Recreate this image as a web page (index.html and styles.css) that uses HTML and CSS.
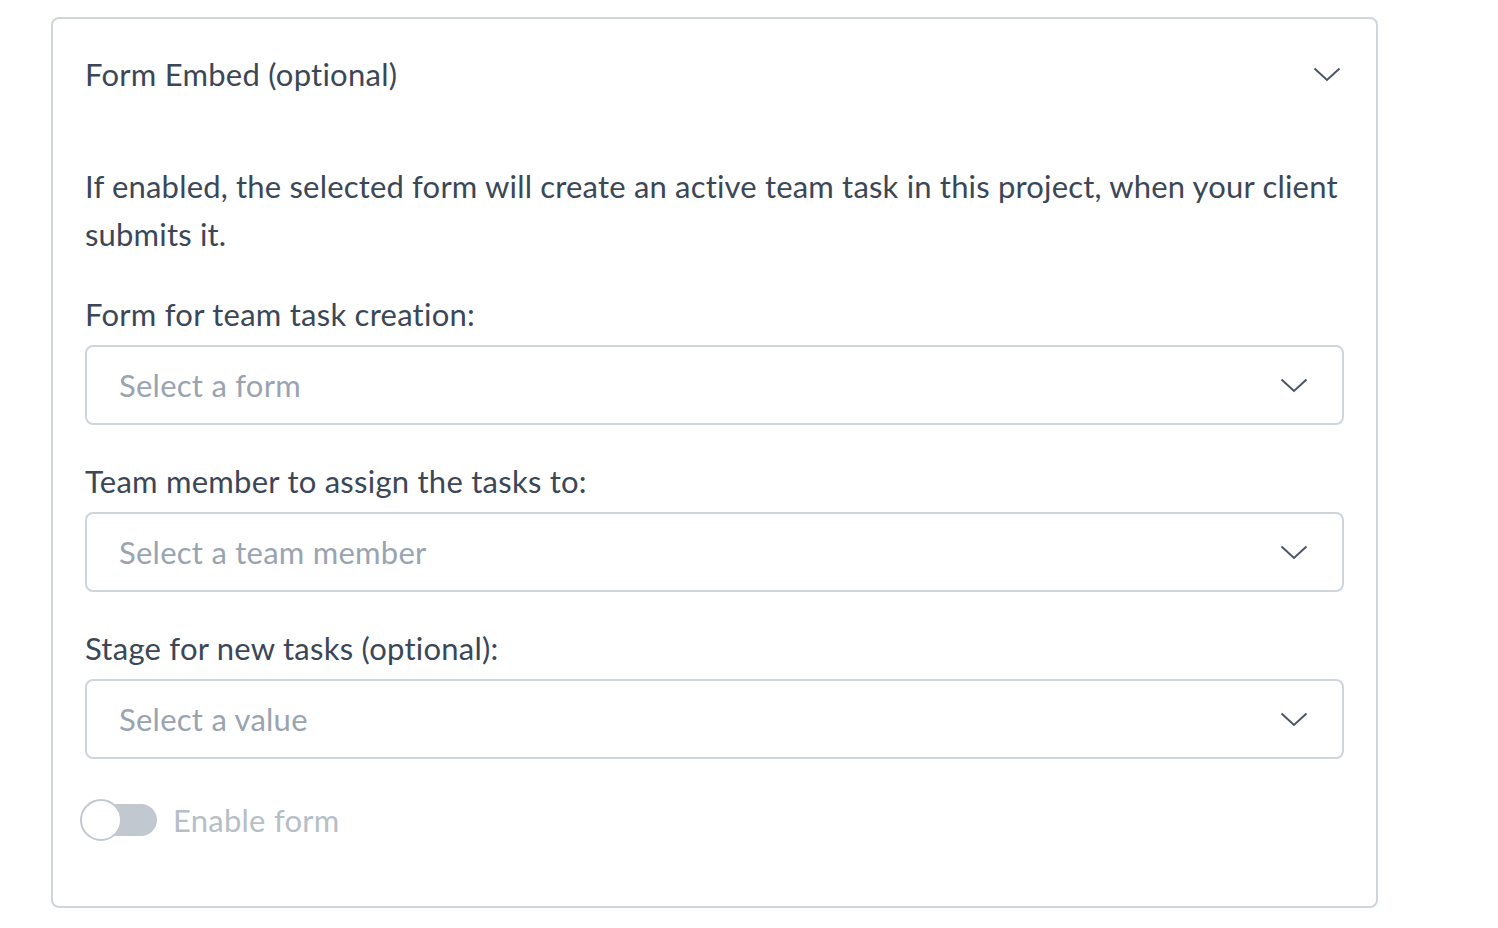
FILE: index.html
```html
<!DOCTYPE html>
<html lang="en">
<head>
<meta charset="utf-8">
<title>Form Embed</title>
<link rel="stylesheet" href="styles.css">
</head>
<body>
<section class="card">
  <header class="card-header">
    <h2 class="card-title">Form Embed (optional)</h2>
    <svg class="chevron" width="28" height="15" viewBox="0 0 28 15" aria-hidden="true"><polyline points="1.5,1.5 14,13 26.5,1.5" fill="none" stroke="#4a5565" stroke-width="2"/></svg>
  </header>
  <div class="card-body">
    <p class="intro">If enabled, the selected form will create an active team task in this project, when your client submits it.</p>
    <div class="field">
      <label class="field-label">Form for team task creation:</label>
      <div class="select">
        <span class="placeholder">Select a form</span>
        <svg class="chevron" width="28" height="15" viewBox="0 0 28 15" aria-hidden="true"><polyline points="1.5,1.5 14,13 26.5,1.5" fill="none" stroke="#4a5565" stroke-width="2"/></svg>
      </div>
    </div>
    <div class="field">
      <label class="field-label">Team member to assign the tasks to:</label>
      <div class="select">
        <span class="placeholder">Select a team member</span>
        <svg class="chevron" width="28" height="15" viewBox="0 0 28 15" aria-hidden="true"><polyline points="1.5,1.5 14,13 26.5,1.5" fill="none" stroke="#4a5565" stroke-width="2"/></svg>
      </div>
    </div>
    <div class="field">
      <label class="field-label">Stage for new tasks (optional):</label>
      <div class="select">
        <span class="placeholder">Select a value</span>
        <svg class="chevron" width="28" height="15" viewBox="0 0 28 15" aria-hidden="true"><polyline points="1.5,1.5 14,13 26.5,1.5" fill="none" stroke="#4a5565" stroke-width="2"/></svg>
      </div>
    </div>
    <div class="toggle-row">
      <span class="toggle"><span class="knob"></span></span>
      <span class="toggle-label">Enable form</span>
    </div>
  </div>
</section>
</body>
</html>
```

FILE: styles.css
```css
html, body {
  margin: 0;
  padding: 0;
  background: #ffffff;
}

body {
  font-family: Lato, "Open Sans", sans-serif;
  font-size: 31px;
  letter-spacing: 0.25px;
  color: #3b4757;
  padding: 17px 0 0 51px;
}

.card {
  box-sizing: border-box;
  width: 1327px;
  height: 891px;
  border: 2px solid #cfd5dd;
  border-radius: 8px;
  background: #ffffff;
}

.card-header {
  display: flex;
  align-items: center;
  justify-content: space-between;
  padding: 31px 35px 32px 32px;
  height: 48px;
}

.card-title {
  margin: 0;
  font-size: 31px;
  font-weight: 400;
  line-height: 48px;
}

.chevron {
  display: block;
  flex: none;
}

.card-body {
  padding: 32px 32px 32px 32px;
}

.intro {
  margin: 0;
  line-height: 48px;
  letter-spacing: 0.18px;
}

.field {
  margin-top: 32px;
}

.field-label {
  display: block;
  line-height: 48px;
  margin-bottom: 7px;
}

.select {
  box-sizing: border-box;
  height: 80px;
  border: 2px solid #cfd5dd;
  border-radius: 8px;
  display: flex;
  align-items: center;
  justify-content: space-between;
  padding: 0 34px 0 32px;
}

.placeholder {
  color: #9aa4b1;
}

.toggle-row {
  display: flex;
  align-items: center;
  margin-top: 40px;
  height: 42px;
}

.toggle {
  position: relative;
  width: 72px;
  height: 32px;
  border-radius: 16px;
  background: #c2c8d0;
  flex: none;
}

.knob {
  position: absolute;
  left: -5px;
  top: -5px;
  box-sizing: border-box;
  width: 42px;
  height: 42px;
  border-radius: 50%;
  background: #ffffff;
  border: 2px solid #c2c8d0;
}

.toggle-label {
  margin-left: 16px;
  color: #b6bec7;
}
```
